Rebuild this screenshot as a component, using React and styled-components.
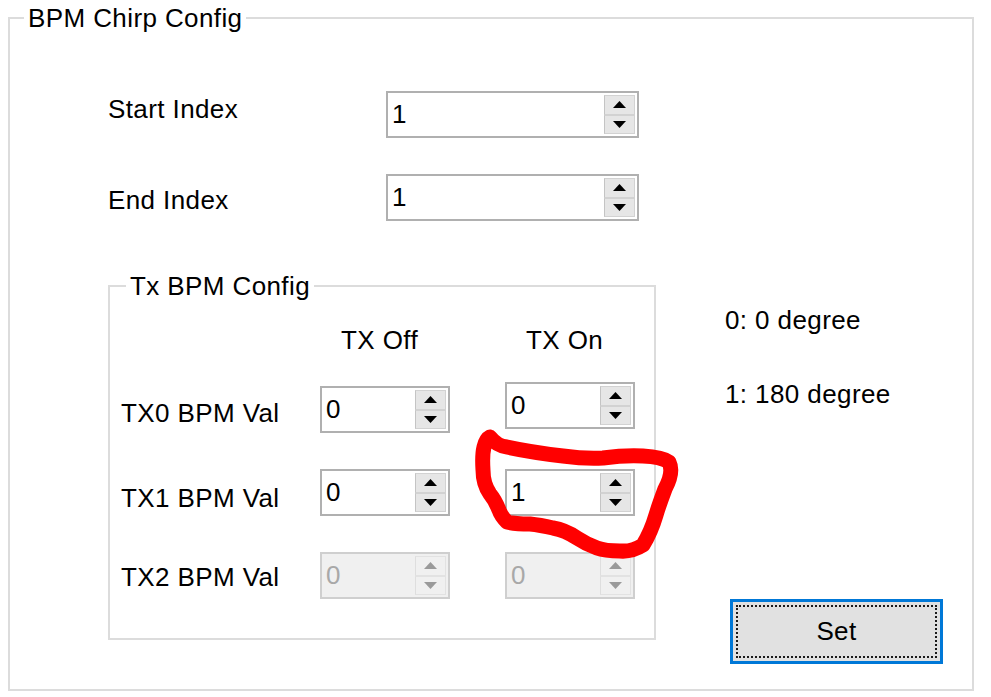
import React from "react";
import styled, {createGlobalStyle} from "styled-components";

const GlobalStyle = createGlobalStyle`
    html, body {
        margin: 0;
        background: #ffffff;
    }
    body {
        font-family: "Liberation Sans", Arial, sans-serif;
        font-size: 26px;
        letter-spacing: 0.4px;
        color: #000000;
    }
`;

// 스핀 박스 (숫자 입력)
function Spin({value, width = 130, disabled, nudge}) {
    const arrow = disabled ? "#9a9a9a" : "#000";
    return (
        <SpinBox $w={width} $disabled={disabled} $nudge={nudge}>
            <SpinText $disabled={disabled}>{value}</SpinText>
            <SpinButtons>
                <SpinHalf $disabled={disabled}>
                    <svg width="13" height="7" viewBox="0 0 13 7">
                        <polygon points="6.5,0 13,7 0,7" fill={arrow}/>
                    </svg>
                </SpinHalf>
                <SpinHalf $disabled={disabled}>
                    <svg width="13" height="7" viewBox="0 0 13 7">
                        <polygon points="0,0 13,0 6.5,7" fill={arrow}/>
                    </svg>
                </SpinHalf>
            </SpinButtons>
        </SpinBox>
    );
}

const bpmRows = [
    {name: "TX0 BPM Val", off: "0", on: "0", top: 27, dy: 16, nudge: 4},
    {name: "TX1 BPM Val", off: "0", on: "1", top: 36, dy: 14},
    {name: "TX2 BPM Val", off: "0", on: "0", top: 36, dy: 10, disabled: true},
];

function App() {
    return (
        <Page>
            <GlobalStyle/>
            <GroupBox $w={966} $h={688} $ml={8} $mt={3}>
                <Legend $ml={14}>BPM Chirp Config</Legend>
                <OuterBody>
                    <FieldRow>
                        <FieldLabel $dy={3}>Start Index</FieldLabel>
                        <Spin value="1" width={253}/>
                    </FieldRow>
                    <FieldRow $mt={36}>
                        <FieldLabel $dy={11}>End Index</FieldLabel>
                        <Spin value="1" width={253}/>
                    </FieldRow>

                    <BottomArea>
                        <GroupBox $w={548} $h={369}>
                            <Legend $ml={16}>Tx BPM Config</Legend>
                            <InnerBody>
                                <GridRow $mt={24}>
                                    <span/>
                                    <ColHead>TX Off</ColHead>
                                    <ColHead>TX On</ColHead>
                                </GridRow>
                                {bpmRows.map((r) => (
                                    <GridRow key={r.name} $mt={r.top}>
                                        <RowLabel $dy={r.dy}>{r.name}</RowLabel>
                                        <Spin value={r.off} disabled={r.disabled} nudge={r.nudge}/>
                                        <Spin value={r.on} disabled={r.disabled}/>
                                    </GridRow>
                                ))}
                            </InnerBody>
                        </GroupBox>

                        <SideColumn>
                            <Note $mt={34}>0: 0 degree</Note>
                            <Note $mt={44}>1: 180 degree</Note>
                            <SetButton>Set</SetButton>
                        </SideColumn>
                    </BottomArea>
                </OuterBody>
            </GroupBox>

            {/* 빨간 손그림 표시 */}
            <Scribble width="991" height="697" viewBox="0 0 991 697">
                <path
                    d="M490 437 Q497 446 507 447 Q530 452 563 456 Q585 459 603 458 Q625 455 643 456 Q662 457 669 462
                       Q674 472 665 489 Q659 505 656 515 Q651 532 643 545 Q632 552 620 551 Q605 551 597 548
                       Q586 544 577 538 Q565 530 553 528 Q540 525 530 524 Q515 524 507 522 Q501 516 499 510
                       Q495 500 490 494 Q483 484 483 470 Q482 455 484 447 Q486 439 490 437"
                    fill="none"
                    stroke="#ff0000"
                    strokeWidth="15"
                    strokeLinecap="round"
                    strokeLinejoin="round"
                />
            </Scribble>
        </Page>
    );
}

export default App;

// 스타일
const Page = styled.div`
    position: relative;
    width: 991px;
    height: 697px;
    overflow: hidden;
`;

const GroupBox = styled.fieldset`
    box-sizing: border-box;
    flex: none;
    width: ${(p) => p.$w}px;
    height: ${(p) => p.$h}px;
    margin: ${(p) => p.$mt || 0}px 0 0 ${(p) => p.$ml || 0}px;
    padding: 0;
    min-width: 0;
    border: 2px solid #dcdcdc;
`;

const Legend = styled.legend`
    margin-left: ${(p) => p.$ml}px;
    padding: 0 4px;
    line-height: 30px;
`;

const OuterBody = styled.div`
    padding: 58px 0 0 98px;
`;

const FieldRow = styled.div`
    display: flex;
    align-items: flex-start;
    margin-top: ${(p) => p.$mt || 0}px;
`;

const FieldLabel = styled.div`
    width: 278px;
    line-height: 30px;
    padding-top: ${(p) => p.$dy}px;
`;

const BottomArea = styled.div`
    display: flex;
    align-items: flex-start;
    margin-top: 50px;
`;

const InnerBody = styled.div`
    display: flex;
    flex-direction: column;
`;

const GridRow = styled.div`
    display: grid;
    grid-template-columns: 155px 130px 130px;
    column-gap: 55px;
    align-items: start;
    margin-top: ${(p) => p.$mt}px;
`;

const ColHead = styled.div`
    line-height: 30px;
    padding-left: 21px;
`;

const RowLabel = styled.div`
    line-height: 30px;
    padding: ${(p) => p.$dy}px 0 0 11px;
    white-space: nowrap;
`;

const SideColumn = styled.div`
    display: flex;
    flex-direction: column;
    align-items: flex-start;
    margin-left: 69px;
`;

const Note = styled.div`
    line-height: 30px;
    margin-top: ${(p) => p.$mt}px;
`;

const SetButton = styled.button`
    position: relative;
    box-sizing: border-box;
    width: 213px;
    height: 65px;
    margin: 190px 0 0 5px;
    border: 3px solid #0078d7;
    background: #e1e1e1;
    font-family: inherit;
    font-size: 26px;
    letter-spacing: 0.4px;
    color: #000;
    padding: 0;

    &::after {
        content: "";
        position: absolute;
        inset: 3px;
        border: 2px dotted #1a1a1a;
    }
`;

const SpinBox = styled.div`
    box-sizing: border-box;
    display: flex;
    width: ${(p) => p.$w}px;
    height: 47px;
    margin-top: ${(p) => p.$nudge || 0}px;
    border: 2px solid ${(p) => (p.$disabled ? "#cfcfcf" : "#b0b0b0")};
    background: ${(p) => (p.$disabled ? "#f0f0f0" : "#ffffff")};
`;

const SpinText = styled.div`
    flex: 1;
    padding-left: 4px;
    line-height: 43px;
    color: ${(p) => (p.$disabled ? "#a8a8a8" : "#000")};
`;

const SpinButtons = styled.div`
    display: flex;
    flex-direction: column;
    width: 31px;
    margin: 2px 2px 2px 0;
`;

const SpinHalf = styled.div`
    flex: 1;
    display: flex;
    align-items: center;
    justify-content: center;
    background: ${(p) => (p.$disabled ? "#f0f0f0" : "#e6e6e6")};
    border: 1px solid ${(p) => (p.$disabled ? "#e2e2e2" : "#d2d2d2")};
    border-left-color: ${(p) => (p.$disabled ? "#dedede" : "#c4c4c4")};
`;

const Scribble = styled.svg`
    position: absolute;
    left: 0;
    top: 0;
    pointer-events: none;
`;
